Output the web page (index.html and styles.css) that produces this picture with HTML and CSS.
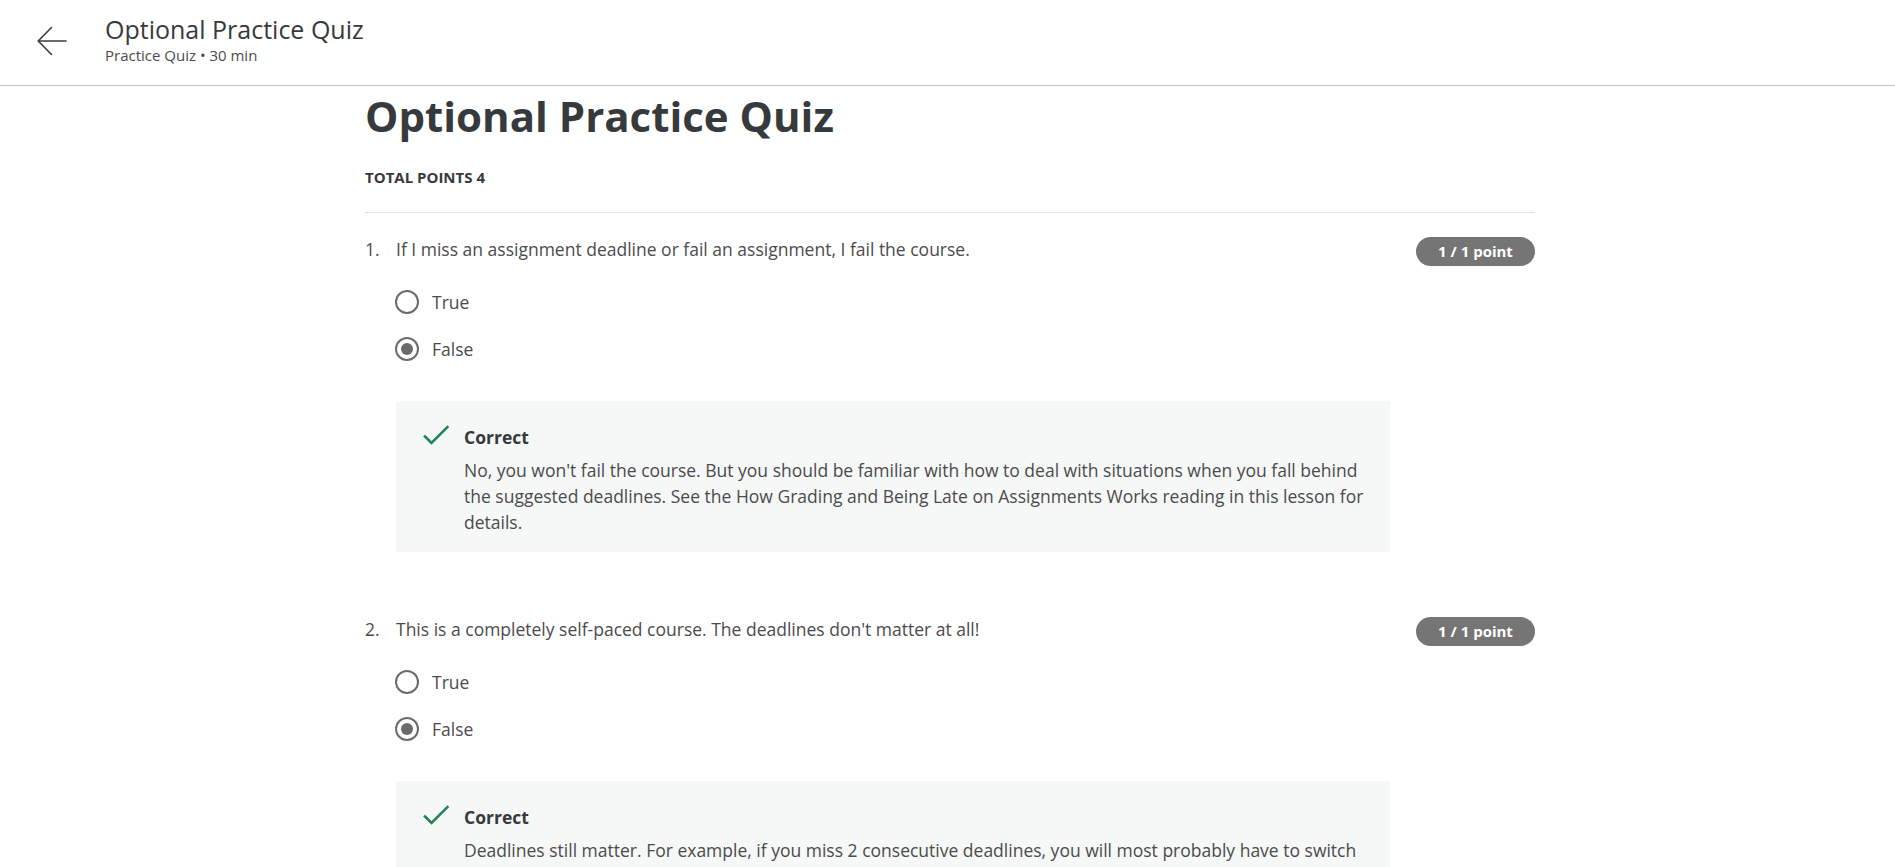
FILE: index.html
```html
<!DOCTYPE html>
<html lang="en">
<head>
<meta charset="utf-8">
<title>Optional Practice Quiz</title>
<link rel="stylesheet" href="styles.css">
</head>
<body>
<header class="topbar">
  <button class="back" aria-label="Back">
    <svg width="30" height="30" viewBox="0 0 30 30" fill="none" stroke="#3a3a3a" stroke-width="1.6" stroke-linecap="round" stroke-linejoin="round">
      <path d="M29 15H1.5"/>
      <path d="M14.5 1.5L1.2 15L14.5 28.5"/>
    </svg>
  </button>
  <div class="topbar-text">
    <div class="topbar-title">Optional Practice Quiz</div>
    <div class="topbar-sub">Practice Quiz • 30 min</div>
  </div>
</header>

<main class="content">
  <section class="quiz-head">
    <h1 class="quiz-title">Optional Practice Quiz</h1>
    <div class="total">TOTAL POINTS 4</div>
  </section>

  <section class="question">
    <div class="q-row">
      <span class="q-num">1.</span>
      <p class="q-text">If I miss an assignment deadline or fail an assignment, I fail the course.</p>
      <span class="badge">1 / 1 point</span>
    </div>
    <div class="options">
      <div class="option"><span class="radio"></span><span class="opt-label">True</span></div>
      <div class="option"><span class="radio checked"></span><span class="opt-label">False</span></div>
    </div>
    <div class="feedback">
      <svg class="check" width="26" height="20" viewBox="0 0 26 20" fill="none" stroke="#1f8354" stroke-width="2.6" stroke-linecap="square">
        <path d="M2 11.5L8.5 18L24.5 2"/>
      </svg>
      <div class="fb-body">
        <div class="fb-title">Correct</div>
        <p class="fb-text">No, you won't fail the course. But you should be familiar with how to deal with situations when you fall behind the suggested deadlines. See the How Grading and Being Late on Assignments Works reading in this lesson for details.</p>
      </div>
    </div>
  </section>

  <section class="question">
    <div class="q-row">
      <span class="q-num">2.</span>
      <p class="q-text">This is a completely self-paced course. The deadlines don't matter at all!</p>
      <span class="badge">1 / 1 point</span>
    </div>
    <div class="options">
      <div class="option"><span class="radio"></span><span class="opt-label">True</span></div>
      <div class="option"><span class="radio checked"></span><span class="opt-label">False</span></div>
    </div>
    <div class="feedback">
      <svg class="check" width="26" height="20" viewBox="0 0 26 20" fill="none" stroke="#1f8354" stroke-width="2.6" stroke-linecap="square">
        <path d="M2 11.5L8.5 18L24.5 2"/>
      </svg>
      <div class="fb-body">
        <div class="fb-title">Correct</div>
        <p class="fb-text">Deadlines still matter. For example, if you miss 2 consecutive deadlines, you will most probably have to switch sessions. Try your best to keep up with the suggested deadlines so you can finish the course on time.</p>
      </div>
    </div>
  </section>
</main>
</body>
</html>
```

FILE: styles.css
```css
* { box-sizing: border-box; }

html, body {
  margin: 0;
  padding: 0;
  background: #ffffff;
  font-family: "Open Sans", "Noto Sans", sans-serif;
  color: #373a3c;
  overflow: hidden;
}

.topbar {
  display: flex;
  align-items: center;
  height: 86px;
  border-bottom: 1px solid #c4c4c4;
  padding-left: 37px;
}

.back {
  display: flex;
  align-items: center;
  justify-content: center;
  width: 30px;
  height: 30px;
  padding: 0;
  border: 0;
  background: none;
  margin-right: 38px;
  margin-top: -4px;
}

.topbar-text {
  display: flex;
  flex-direction: column;
  margin-top: -8px;
}

.topbar-title {
  font-size: 25px;
  line-height: 32px;
  color: #373a3c;
}

.topbar-sub {
  font-size: 15px;
  line-height: 20px;
  color: #4b4b4b;
}

.content {
  width: 1175px;
  margin: 0 auto;
  padding-left: 5px;
}

.quiz-head {
  padding-top: 5px;
  padding-bottom: 25px;
  border-bottom: 1px solid #e0e0e0;
}

.quiz-title {
  margin: 0;
  font-size: 42px;
  line-height: 50px;
  font-weight: 700;
  color: #373a3c;
}

.total {
  margin-top: 26px;
  font-size: 15px;
  line-height: 20px;
  font-weight: 700;
  color: #373a3c;
}

.question {
  padding-top: 24px;
  padding-bottom: 41px;
}

.q-row {
  display: flex;
  align-items: center;
  height: 24px;
}

.q-num {
  width: 31px;
  flex: none;
  font-size: 17.5px;
  color: #4b4b4b;
}

.q-text {
  flex: 1;
  margin: 0;
  font-size: 17.5px;
  line-height: 24px;
  color: #4b4b4b;
}

.badge {
  flex: none;
  display: flex;
  align-items: center;
  justify-content: center;
  width: 119px;
  height: 29px;
  margin-top: 4px;
  border-radius: 15px;
  background: #757575;
  color: #ffffff;
  font-size: 15px;
  font-weight: 700;
}

.options {
  display: flex;
  flex-direction: column;
  gap: 23px;
  margin: 29px 0 0 30px;
}

.option {
  display: flex;
  align-items: center;
  height: 24px;
}

.radio {
  flex: none;
  width: 24px;
  height: 24px;
  border: 2px solid #6b6b6b;
  border-radius: 50%;
  margin-right: 13px;
  display: flex;
  align-items: center;
  justify-content: center;
}

.radio.checked::after {
  content: "";
  width: 12px;
  height: 12px;
  border-radius: 50%;
  background: #6b6b6b;
}

.opt-label {
  font-size: 17.5px;
  line-height: 24px;
  color: #4b4b4b;
}

.feedback {
  display: flex;
  align-items: flex-start;
  width: 994px;
  margin: 40px 0 0 31px;
  padding: 23px 25px 17px 27px;
  background: #f5f8f7;
}

.check {
  flex: none;
  margin-top: 1px;
  margin-right: 15px;
}

.fb-title {
  font-size: 17.5px;
  line-height: 26px;
  font-weight: 700;
  color: #373a3c;
  margin-bottom: 7px;
}

.fb-text {
  margin: 0;
  font-size: 17.5px;
  line-height: 26px;
  color: #4b4b4b;
}
```
